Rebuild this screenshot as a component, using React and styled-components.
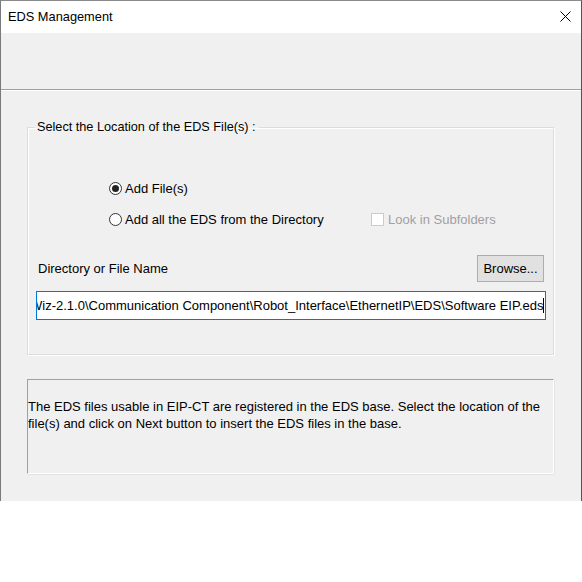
import React from 'react';
import styled, { createGlobalStyle } from 'styled-components';

const GlobalStyle = createGlobalStyle`
    html, body {
        margin: 0;
        padding: 0;
        background: #ffffff;
    }
    body {
        font-family: "Liberation Sans", Arial, sans-serif;
        font-size: 13px;
        color: #000000;
    }
`

const Window = styled.div`
    width: 582px;
    height: 501px;
    box-sizing: border-box;
    border-top: 1px solid #8a8a8a;
    border-left: 1px solid #7a7a7a;
    border-right: 1px solid #555555;
    background: #f0f0f0;
    display: flex;
    flex-direction: column;
`

const TitleBar = styled.div`
    height: 32px;
    background: #ffffff;
    display: flex;
    align-items: center;
    justify-content: space-between;
    padding: 0 10px 0 7px;
    .title__text {
        font-size: 12.8px;
        line-height: 16px;
        padding-bottom: 1px;
    }
    .title__close {
        display: flex;
        align-items: center;
        padding-bottom: 2px;
    }
`

const HeaderArea = styled.div`
    height: 56px;
    border-bottom: 1px solid #a0a0a0;
    box-shadow: 0 1px 0 #ffffff;
`

const Content = styled.div`
    padding: 29px 27px 0 26px;
    display: flex;
    flex-direction: column;
`

const GroupBox = styled.fieldset`
    margin: 0;
    padding: 0 0 34px 0;
    border: 1px solid #dcdcdc;
    box-shadow: inset 1px 1px 0 #ffffff, 1px 1px 0 #ffffff;
    min-inline-size: 0;
    display: flex;
    flex-direction: column;
    legend {
        margin-left: 6px;
        padding: 0 3px;
        font-size: 12.7px;
        line-height: 17px;
    }
`

const OptionList = styled.div`
    display: flex;
    flex-direction: column;
    gap: 11px;
    margin-top: 42px;
    padding-left: 81px;
`

const OptionRow = styled.div`
    display: flex;
    align-items: center;
    height: 20px;
`

const Radio = styled.label`
    display: flex;
    align-items: center;
    gap: 3px;
    width: ${p => p.$width || 'auto'};
    white-space: nowrap;
    overflow: hidden;
    .radio__dot {
        flex: none;
        box-sizing: border-box;
        width: 13px;
        height: 13px;
        border: 1px solid #333333;
        border-radius: 50%;
        background: #ffffff;
        display: flex;
        align-items: center;
        justify-content: center;
    }
    .radio__dot--on::after {
        content: '';
        width: 7px;
        height: 7px;
        border-radius: 50%;
        background: #222222;
    }
`

const Check = styled.label`
    display: flex;
    align-items: center;
    gap: 4px;
    margin-left: 46px;
    color: #a0a0a0;
    .check__box {
        box-sizing: border-box;
        width: 13px;
        height: 13px;
        border: 1px solid #cccccc;
        background: #ffffff;
    }
`

const FileRow = styled.div`
    display: flex;
    align-items: center;
    justify-content: space-between;
    margin-top: 26px;
    padding: 0 9px 0 10px;
`

const Button = styled.button`
    width: 67px;
    height: 27px;
    background: #e1e1e1;
    border: 1px solid #adadad;
    font-family: inherit;
    font-size: 13px;
    color: #000000;
    padding: 0;
`

const PathInput = styled.div`
    margin: 9px 7px 0 8px;
    height: 29px;
    box-sizing: border-box;
    border: 1px solid #0078d7;
    background: #ffffff;
    display: flex;
    align-items: center;
    overflow: hidden;
    padding-left: 1px;
    white-space: nowrap;
    .path__text {
        margin-left: -8px;
    }
    .path__caret {
        flex: none;
        width: 1px;
        height: 15px;
        background: #000000;
        margin-left: -1px;
    }
`

const InfoBox = styled.div`
    margin-top: 24px;
    height: 95px;
    box-sizing: border-box;
    border-top: 1px solid #a0a0a0;
    border-left: 1px solid #a0a0a0;
    border-right: 1px solid #ffffff;
    border-bottom: 1px solid #ffffff;
    box-shadow: 1px 1px 0 #e3e3e3;
    padding-top: 18px;
    line-height: 17px;
    p {
        margin: 0;
        width: 520px;
    }
`

const CloseIcon = () => (
    <svg width="11" height="11" viewBox="0 0 11 11">
        <path d="M0.5 0.5 L10.5 10.5 M10.5 0.5 L0.5 10.5" stroke="#000" strokeWidth="1" />
    </svg>
)

const App = () => {
    return (
        <>
            <GlobalStyle />
            <Window>
                <TitleBar>
                    <span className='title__text'>EDS Management</span>
                    <span className='title__close'><CloseIcon /></span>
                </TitleBar>
                <HeaderArea />
                <Content>
                    <GroupBox>
                        <legend>Select the Location of the EDS File(s) :</legend>
                        <OptionList>
                            <OptionRow>
                                <Radio>
                                    <span className='radio__dot radio__dot--on' />
                                    Add File(s)
                                </Radio>
                            </OptionRow>
                            <OptionRow>
                                <Radio $width='216px'>
                                    <span className='radio__dot' />
                                    Add all the EDS from the Directory
                                </Radio>
                                <Check>
                                    <span className='check__box' />
                                    Look in Subfolders
                                </Check>
                            </OptionRow>
                        </OptionList>
                        <FileRow>
                            <span>Directory or File Name</span>
                            <Button>Browse...</Button>
                        </FileRow>
                        <PathInput>
                            <span className='path__text'>Wiz-2.1.0\Communication Component\Robot_Interface\EthernetIP\EDS\Software EIP.eds</span>
                            <span className='path__caret' />
                        </PathInput>
                    </GroupBox>
                    <InfoBox>
                        <p>The EDS files usable in EIP-CT are registered in the EDS base. Select the location of the file(s) and click on Next button to insert the EDS files in the base.</p>
                    </InfoBox>
                </Content>
            </Window>
        </>
    )
}

export default App
